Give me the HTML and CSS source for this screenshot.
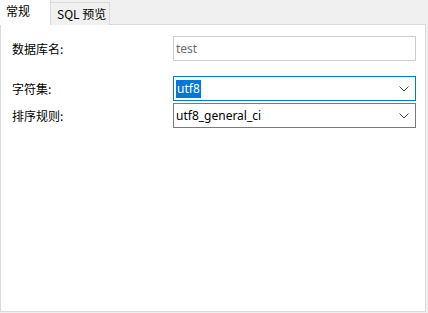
FILE: index.html
```html
<!DOCTYPE html>
<html lang="zh">
<head>
    <meta charset="UTF-8">
    <title>新建数据库</title>
    <link rel="stylesheet" href="styles.css">
</head>
<body>
    <!-- Tabs -->
    <div class="tabs">
        <div class="tab active">常规</div>
        <div class="tab">SQL 预览</div>
    </div>

    <!-- Panel -->
    <div class="panel">
        <div class="row">
            <label class="label">数据库名:</label>
            <div class="field disabled">test</div>
        </div>

        <div class="row row-gap">
            <label class="label">字符集:</label>
            <div class="field select focused">
                <span class="selected">utf8</span>
                <svg class="chevron" width="10" height="6" viewBox="0 0 10 6"><path d="M0.5 0.5 L5 5 L9.5 0.5" fill="none" stroke="#444" stroke-width="1"/></svg>
            </div>
        </div>

        <div class="row row-tight">
            <label class="label">排序规则:</label>
            <div class="field select">
                <span>utf8_general_ci</span>
                <svg class="chevron" width="10" height="6" viewBox="0 0 10 6"><path d="M0.5 0.5 L5 5 L9.5 0.5" fill="none" stroke="#444" stroke-width="1"/></svg>
            </div>
        </div>
    </div>
</body>
</html>
```

FILE: styles.css
```css
* {
    margin: 0;
    padding: 0;
    box-sizing: border-box;
}

body {
    font-family: "Noto Sans CJK SC", "Noto Sans", sans-serif;
    font-size: 12px;
    color: #000;
    background-color: #f0f0f0;
    width: 428px;
    height: 313px;
}

.tabs {
    display: flex;
    align-items: flex-end;
    height: 25px;
    position: relative;
    z-index: 1;
}

.tab {
    height: 23px;
    width: 59px;
    padding-left: 6px;
    line-height: 21px;
    background-color: #f0f0f0;
    border: 1px solid #d9d9d9;
    border-bottom: none;
    border-left: none;
}

.tab.active {
    height: 25px;
    width: 51px;
    padding-left: 6px;
    line-height: 22px;
    background-color: #fff;
    border-top: none;
}

.panel {
    width: 426px;
    height: 288px;
    margin-top: -1px;
    background-color: #fff;
    border: 1px solid #d9d9d9;
    padding: 11px 0 0 11px;
}

.row {
    display: flex;
    align-items: center;
}

.row-gap {
    margin-top: 15px;
}

.row-tight {
    margin-top: 2px;
}

.label {
    width: 161px;
}

.field {
    width: 243px;
    height: 25px;
    border: 1px solid #cccccc;
    padding-left: 2px;
    line-height: 22px;
    font-family: "Noto Sans", "Noto Sans CJK SC", sans-serif;
    font-size: 12px;
    display: flex;
    align-items: center;
}

.field.disabled {
    color: #6d6d6d;
}

.field.select {
    border-color: #7a7a7a;
    height: 25px;
    justify-content: space-between;
    padding-right: 6px;
}

.field.focused {
    border-color: #0078d7;
}

.selected {
    background-color: #0078d7;
    color: #fff;
    padding: 0 1px;
    line-height: 18px;
}

.chevron {
    display: block;
}
```
